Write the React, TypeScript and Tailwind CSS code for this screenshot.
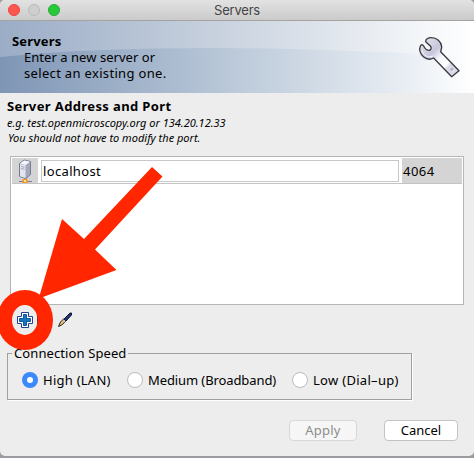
import React from 'react';

function Wrench() {
  return (
    <svg className="h-[60px] w-[64px]" viewBox="0 0 192 180">
      <defs>
        <linearGradient id="steel" gradientUnits="userSpaceOnUse" x1="40" y1="30" x2="140" y2="135">
          <stop offset="0" stopColor="#e0e0ec" />
          <stop offset=".32" stopColor="#c6c6da" />
          <stop offset=".5" stopColor="#f6f6fc" />
          <stop offset=".7" stopColor="#ffffff" />
          <stop offset=".76" stopColor="#d8d8e6" />
          <stop offset="1" stopColor="#dcdce8" />
        </linearGradient>
      </defs>
      <path
        d="M47 35C46 28 54 23 64 23C80 23 94 35 95 50C95 55 93 60 92 65L147 122L125 140L71 84C62 89 50 88 41 81C31 73 26 59 31 48C34 43 38 43 41 48C44 55 50 61 58 61C64 59 65 53 61 48Z"
        fill="url(#steel)" stroke="#3a3a42" strokeWidth="4" strokeLinejoin="round"
      />
      <path d="M36 60C38 77 56 84 68 78" fill="none" stroke="#f2f2fa" strokeWidth="3" />
      <circle cx="126" cy="118" r="5" fill="#b4b4cc" />
      <path d="M126 124a5 5 0 0 0 5-6" fill="none" stroke="#fff" strokeWidth="2" />
    </svg>
  );
}

function ServerIcon() {
  return (
    <svg className="h-6 w-4" viewBox="0 0 16 24">
      <path d="M2.500 4.500 7 1l6.500 1.500v13L9 19.500l-6.500-2z" fill="#a4a8ba" stroke="#757a90" strokeLinejoin="round" />
      <path d="m3 5 5.500 1.200V19L3 17.300z" fill="#e2e5f0" />
      <path d="m3 4.500 4.200-3L13 2.800 8.600 6z" fill="#f7f8ff" />
      <path d="M4 7.500 7.500 8.300M4 9.500l3.500.8" stroke="#8f94aa" strokeWidth=".8" />
      <path d="M8 19v3M2 22.500h13" stroke="#777e88" />
      <rect x="5.500" y="20" width="5" height="4" fill="#f5962c" />
      <rect x="7" y="21" width="2" height="2" fill="#ffe08a" />
    </svg>
  );
}

function Radio({ checked }: { checked?: boolean }) {
  return checked ? (
    <span className="flex size-4 shrink-0 items-center justify-center rounded-full bg-[#3b89fb]">
      <span className="size-[6px] rounded-full bg-white" />
    </span>
  ) : (
    <span className="size-4 shrink-0 rounded-full border border-[#bcbcbc] bg-white" />
  );
}

function Callout() {
  return (
    <svg className="pointer-events-none absolute inset-0 h-full w-full" viewBox="0 0 474 458">
      <path d="M152 167 162.500 176.500 95 249.500 116.500 270 43 297 38 302 40 294 62 219 84 239Z" fill="#ff2600" />
      <path d="M37.500 314v12" stroke="#4a1c50" strokeWidth="1" />
      <path
        fillRule="evenodd"
        d="M-3 320a28 30 0 1 0 56 0a28 30 0 1 0-56 0ZM12 320a12.800 15 0 1 0 25.600 0a12.800 15 0 1 0-25.600 0Z"
        fill="#ff2600"
      />
    </svg>
  );
}

export default function App() {
  return (
    <div className="relative h-[458px] w-[474px] overflow-hidden bg-[#9b9ba0] font-['Noto_Sans','Open_Sans',sans-serif] text-[13px] leading-4 whitespace-nowrap text-black">
      <div className="flex h-[456px] flex-col overflow-hidden rounded-[5px] bg-[#ededed]">
        <div className="flex h-[21px] shrink-0 items-center border-b border-[#a5a39f] bg-linear-to-b from-[#e2e2e2] to-[#cbcbcb] pl-2">
          <div className="flex gap-2">
            <span className="size-3 rounded-full border border-[#e9453f] bg-[#fc5650]" />
            <span className="size-3 rounded-full border border-[#b9b9b9] bg-[#cecece]" />
            <span className="size-3 rounded-full border border-[#20ad30] bg-[#27c93b]" />
          </div>
          <span className="ml-[154px] font-[Inter,sans-serif] text-[13px] tracking-[-0.2px] text-[#454545]">Servers</span>
        </div>
        <div className="relative flex h-[72px] shrink-0 justify-between bg-linear-to-r from-[#9bacc6] via-[#ccd5e1] to-white">
          <svg className="absolute inset-0 h-full w-full" viewBox="0 0 474 72" preserveAspectRatio="none">
            <defs>
              <linearGradient id="wave">
                <stop offset="0" stopColor="#7e95b5" />
                <stop offset=".5" stopColor="#bccada" />
                <stop offset=".85" stopColor="#e8edf3" />
                <stop offset="1" stopColor="#fff" />
              </linearGradient>
            </defs>
            <path d="M0 36C120 24 280 24 474 36V72H0Z" fill="url(#wave)" />
          </svg>
          <div className="relative pt-[12px] pl-3">
            <div className="font-bold tracking-[0.15px]">Servers</div>
            <div className="pl-3 tracking-[0.04px]">Enter a new server or</div>
            <div className="pl-3 tracking-[0.33px]">select an existing one.</div>
          </div>
          <div className="relative pt-[9px]"><Wrench /></div>
        </div>
        <div className="h-[53px] shrink-0 pt-[5px] pl-[7px]">
          <div className="font-bold tracking-[0.38px]">Server Address and Port</div>
          <div className="pt-px text-[11px] leading-[15px] italic">
            <div>e.g. test.openmicroscopy.org or 134.20.12.33</div>
            <div className="pl-px">You should not have to modify the port.</div>
          </div>
        </div>
        <div className="mt-[10px] ml-[10px] h-[149px] w-[454px] shrink-0 border border-[#b5b5b5] bg-white p-px">
          <div className="flex h-[26px] border-b border-[#c4c4c4]">
            <div className="flex w-[26px] justify-center bg-[#d4d4d4] pt-px"><ServerIcon /></div>
            <div className="mt-[2px] ml-[3px] flex h-[22px] w-[358px] items-center border border-[#c8c8c8] pl-px tracking-[0.35px]">localhost</div>
            <div className="ml-[3px] flex flex-1 items-center bg-[#d4d4d4] pl-px tracking-[0.5px]">4064</div>
          </div>
        </div>
        <div className="flex h-[40px] shrink-0 items-start pt-[7px] pl-[17px]">
          <svg className="size-4" viewBox="0 0 16 16">
            <path d="M4.500 .5h7v4h4v7h-4v4h-7v-4h-4v-7h4z" fill="#fff" stroke="#2a3f86" strokeLinejoin="round" />
            <path d="M6.500 2.500h3v4h4v3h-4v4h-3v-4h-4v-3h4z" fill="#1674bd" stroke="#0a58a0" />
          </svg>
          <svg className="ml-[24px] size-4" viewBox="0 0 16 16">
            <path d="M1.500 14.500 3.500 10 7 6.500 9 8.500 5.500 12.500z" fill="#e2c47a" stroke="#28220c" />
            <path d="M7 7 13 1h1.500v2L9 9z" fill="#24366f" stroke="#0b153d" />
            <path d="m6 8 2 2" stroke="#b9c4d8" />
          </svg>
        </div>
        <fieldset className="ml-[7px] h-[55px] w-[405px] shrink-0 border border-[#a0a0a0] shadow-[1px_1px_0_#fff]">
          <legend className="ml-1 px-[2px] tracking-[0.1px]">Connection Speed</legend>
          <div className="flex items-center pt-[11px] pl-[14px]">
            <Radio checked />
            <span className="ml-[5px] w-[84px] tracking-[0.25px]">High (LAN)</span>
            <Radio />
            <span className="ml-[5px] w-[144px] tracking-[-0.1px]">Medium (Broadband)</span>
            <Radio />
            <span className="ml-[5px] tracking-[0.3px]">Low (Dial–up)</span>
          </div>
        </fieldset>
        <div className="flex pt-[20px] pl-[289px]">
          <button className="flex h-[21px] w-[68px] items-center justify-center rounded-[4px] border border-[#d8d8d8] bg-[#f6f6f6] pb-px tracking-[0.2px] text-[#8c8c8c]">Apply</button>
          <button className="ml-[27px] flex h-[21px] w-[74px] items-center justify-center rounded-[4px] border border-[#c3c3c3] bg-white pb-px">Cancel</button>
        </div>
      </div>
      <Callout />
    </div>
  );
}
